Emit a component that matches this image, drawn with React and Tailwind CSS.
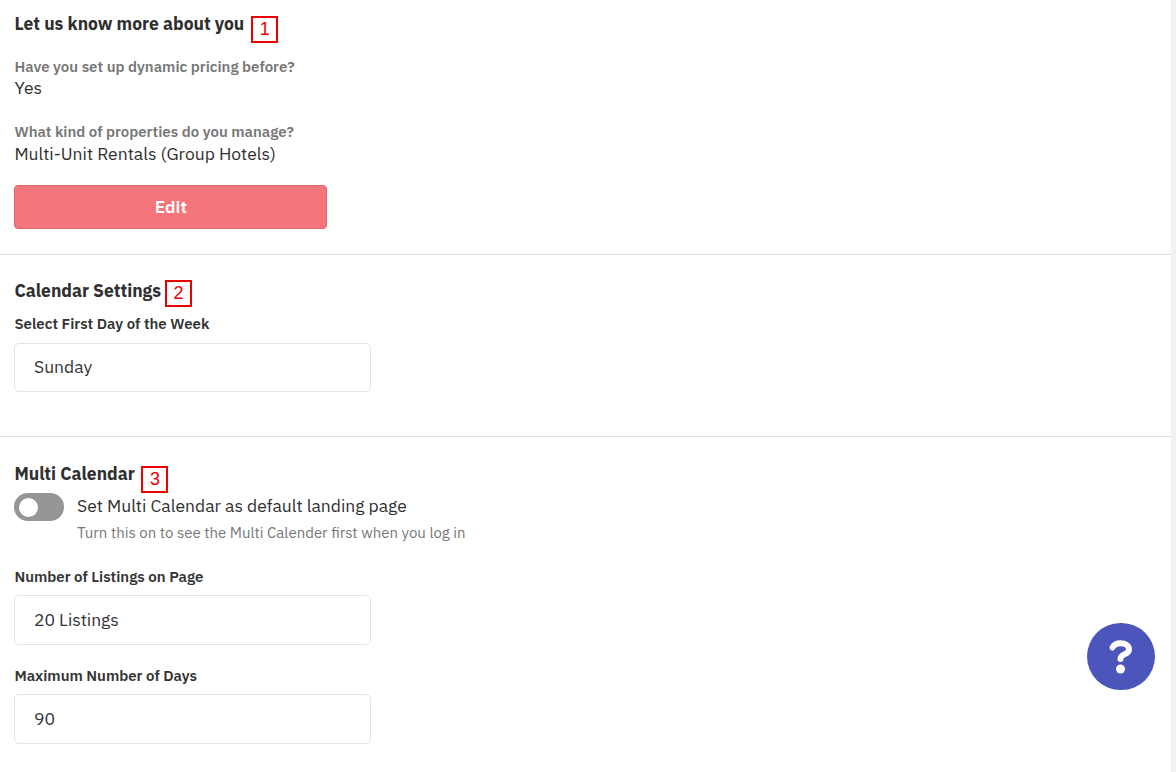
const Marker = ({ n, className }) => (
  <span className={`flex h-[27px] w-[27px] items-center justify-center border-2 border-[#ee0000] font-['Liberation_Sans'] text-[18px] font-normal text-[#ee0000] ${className}`}>
    {n}
  </span>
);

const Field = ({ label, value, boxClass }) => (
  <div>
    <div className="text-[15px] font-semibold leading-[20px] text-[#333]">{label}</div>
    <div className={`flex w-[357px] items-center rounded-[5px] border border-[#e2e4e8] bg-white px-[18.6px] text-[17.5px] text-[#333] ${boxClass}`}>
      {value}
    </div>
  </div>
);

const App = () => {
  return (
    <div className="relative flex h-[772px] w-[1176px] overflow-hidden bg-white font-['IBM_Plex_Sans','Noto_Sans',sans-serif] text-[#2f2f2f]">
      <div className="h-full w-[1171px]">
        {/* About you */}
        <section className="h-[255px] border-b border-[#dfe0e6] pl-[14.4px] pt-[12px]">
          <div className="flex items-start gap-[7px]">
            <h2 className="text-[17.5px] font-bold leading-[24px]">Let us know more about you</h2>
            <Marker n="1" className="mt-[4px]" />
          </div>
          <div className="mt-[14px] text-[15px] font-semibold leading-[20px] text-[#777]">Have you set up dynamic pricing before?</div>
          <div className="text-[17.5px] leading-[22px]">Yes</div>
          <div className="mt-[23px] text-[15px] font-semibold leading-[20px] text-[#777]">What kind of properties do you manage?</div>
          <div className="text-[17.5px] leading-[24px]">Multi-Unit Rentals (Group Hotels)</div>
          <button className="mt-[19px] h-[44px] w-[313px] rounded-[4px] border border-[#e0666c] bg-[#f5767a] text-[17.5px] font-semibold text-white">
            Edit
          </button>
        </section>

        {/* Calendar */}
        <section className="h-[182px] border-b border-[#dfe0e6] pl-[14.4px] pt-[24px]">
          <div className="flex items-start gap-[4px]">
            <h2 className="text-[17.5px] font-bold leading-[24px]">Calendar Settings</h2>
            <Marker n="2" className="mt-[1px]" />
          </div>
          <div className="mt-[7px]">
            <Field label="Select First Day of the Week" value="Sunday" boxClass="mt-[9px] h-[49px]" />
          </div>
        </section>

        {/* Multi calendar */}
        <section className="pl-[14.4px] pt-[25px]">
          <div className="flex items-start gap-[6.6px]">
            <h2 className="text-[17.5px] font-bold leading-[24px]">Multi Calendar</h2>
            <Marker n="3" className="mt-[4px]" />
          </div>
          <div className="mt-[-3px] flex items-start gap-[12.6px]">
            <div className="mt-[3px] flex h-[28px] w-[50px] items-center rounded-full bg-[#959595] pl-[5px]">
              <div className="h-[19px] w-[19px] rounded-full bg-white" />
            </div>
            <div className="pt-[2px]">
              <div className="text-[17.5px] leading-[28px]">Set Multi Calendar as default landing page</div>
              <div className="mt-[3px] text-[15px] leading-[20px] text-[#777]">Turn this on to see the Multi Calender first when you log in</div>
            </div>
          </div>
          <div className="mt-[24px]">
            <Field label="Number of Listings on Page" value="20 Listings" boxClass="mt-[8px] h-[50px]" />
          </div>
          <div className="mt-[21px]">
            <Field label="Maximum Number of Days" value="90" boxClass="mt-[8px] h-[50px]" />
          </div>
        </section>
      </div>

      {/* Scrollbar strip */}
      <div className="h-full w-[5px] bg-[#f1f1f3]" />

      {/* Help button */}
      <button className="absolute left-[1087px] top-[623px] flex h-[67px] w-[68px] items-center justify-center rounded-full bg-[#4c55bb]">
        <svg width="24" height="34" viewBox="0 0 24 34" fill="none">
          <path d="M3.5 7.5C5 4.5 8 3.2 11.5 3.2c5 0 8.5 2.5 8.5 6 0 2.8-2 4-4.5 5.2-2.5 1.2-4 1.7-4 4.6" stroke="white" strokeWidth="6" strokeLinecap="round" />
          <circle cx="11.5" cy="29" r="4.5" fill="white" />
        </svg>
      </button>
    </div>
  );
};

export default App;
